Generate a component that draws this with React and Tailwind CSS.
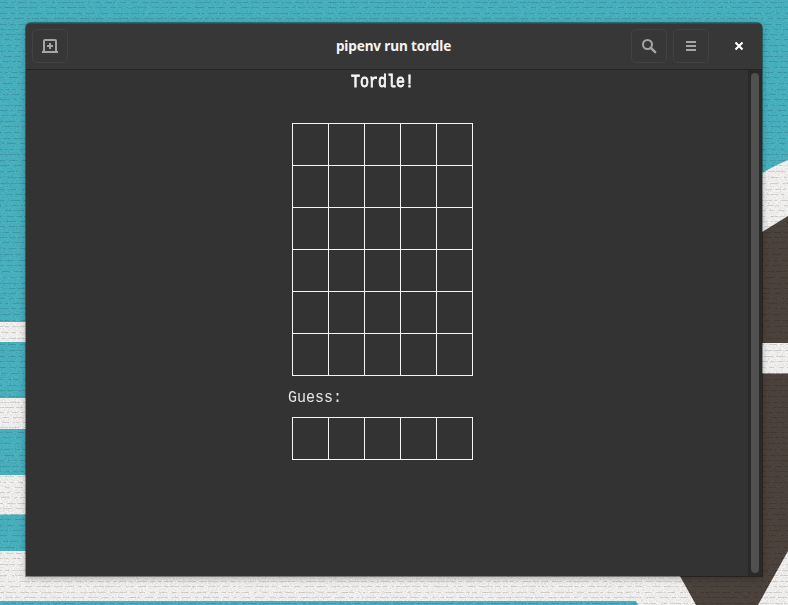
import React from "react";

// Deterministic generator, so that the weave looks the same on each load.
function makeWeave() {
  let seed = 17;
  const next = () => {
    seed = (seed * 16807) % 2147483647;
    return seed / 2147483647;
  };
  const out = [];
  for (let y = 2; y < 605; y += 5 + Math.floor(next() * 2)) {
    let x = -5;
    while (x < 788) {
      const len = 2 + Math.floor(next() * 9);
      out.push(`M${x} ${y}.5h${len}`);
      x += len + 1 + Math.floor(next() * 5);
    }
  }
  return out.join("");
}

const weave = makeWeave();

function Wallpaper() {
  return (
    <svg className="absolute inset-0" width="788" height="605" viewBox="0 0 788 605" aria-hidden="true">
      <defs>
        <filter id="grain" x="0" y="0" width="100%" height="100%">
          <feTurbulence type="fractalNoise" baseFrequency="0.6 0.8" numOctaves="2" seed="4" />
          <feColorMatrix values="0 0 0 0 0  0 0 0 0 0  0 0 0 0 0  0.7 0 0 0 -0.27" />
        </filter>
      </defs>
      <rect width="788" height="605" fill="#4ab4c2" />
      <g fill="#f5f4f3">
        <rect y="322" width="400" height="20" />
        <rect y="398" width="400" height="31" />
        <rect y="475" width="400" height="39.500" />
        <path d="M0 551H788V605H638L636 601H0Z" />
        <path d="M740 184 762 173Q776 165 788 160V605H740Z" />
      </g>
      <path d="M740 245 762 232 788 216V343H740ZM660 373.500H788V551L758 605H696L680 576 660 540Z" fill="#4e443e" />
      <path d={weave} stroke="#000" strokeOpacity="0.12" fill="none" />
      <rect width="788" height="605" filter="url(#grain)" opacity="0.35" />
    </svg>
  );
}

function HeaderButton({ label, children }) {
  return (
    <button
      aria-label={label}
      className="flex h-[34px] w-9 items-center justify-center rounded-[5px] border border-[#424242] text-[#a5a5a5]"
    >
      {children}
    </button>
  );
}

function TitleBar() {
  return (
    <header className="grid h-[47px] shrink-0 grid-cols-[1fr_auto_1fr] items-center border-t border-b border-t-[#454545] border-b-[#242424] bg-[#373737] pb-[2px]">
      <div className="pl-1.5">
        <HeaderButton label="New tab">
          <svg width="16" height="16" viewBox="0 0 16 16">
            <path d="M0 13H16V15H0ZM1 13V3Q1 1 3 1H13Q15 1 15 3V13H13V3H3V13Z" fill="currentColor" />
            <path d="M7 5H9V7H11V9H9V11H7V9H5V7H7Z" fill="currentColor" />
          </svg>
        </HeaderButton>
      </div>
      <h1 className="pr-px font-['Noto_Sans',sans-serif] text-[13.6px] leading-5 font-bold tracking-[-0.15px] text-[#f4f4f4]">
        pipenv run tordle
      </h1>
      <div className="flex items-center justify-end">
        <HeaderButton label="Search">
          <svg width="16" height="16" viewBox="0 0 16 16" fill="none" stroke="currentColor">
            <circle cx="6.500" cy="6.500" r="4.500" strokeWidth="2" />
            <path d="M9.800 9.800 14.200 14.200" strokeWidth="2.400" strokeLinecap="round" />
          </svg>
        </HeaderButton>
        <span className="w-1.5" />
        <HeaderButton label="Menu">
          <svg width="16" height="16" viewBox="0 0 16 16" fill="currentColor">
            <path d="M3 3H13V5H3ZM3 7H13V9H3ZM3 11H13V13H3Z" />
          </svg>
        </HeaderButton>
        <button aria-label="Close" className="mr-[15px] ml-[22px] flex size-4 items-center justify-center text-white">
          <svg width="16" height="16" viewBox="0 0 16 16" fill="none" stroke="currentColor">
            <path d="M4.500 4.500 11.500 11.500M11.500 4.500 4.500 11.500" strokeWidth="2.100" />
          </svg>
        </button>
      </div>
    </header>
  );
}

function Board({ rows }) {
  return (
    <div className="grid w-[181px] grid-cols-5 border-t border-l border-[#f6f6f6]">
      {Array.from({ length: rows * 5 }, (_, i) => (
        <div key={i} className="h-[42px] border-r border-b border-[#f6f6f6]" />
      ))}
    </div>
  );
}

export default function App() {
  return (
    <main className="relative h-[605px] w-[788px] overflow-hidden pt-[23px] pl-[26px]">
      <Wallpaper />
      <section className="relative flex h-[553px] w-[736px] flex-col overflow-hidden rounded-t-[5px] bg-[#333] shadow-[0_0_0_1px_rgba(0,0,0,0.35),0_2px_7px_rgba(0,0,0,0.3)]">
        <TitleBar />
        <div className="flex min-h-0 flex-1">
          <div className="flex w-[722px] flex-col font-['Liberation_Mono',monospace] text-[15px] leading-[21px] text-[#eee]">
            <h2 className="ml-[325px] h-[21px] origin-center scale-y-[1.2] pt-[1.5px] font-normal [-webkit-text-stroke:0.7px_#f6f6f6] text-[#f6f6f6]">
              Tordle!
            </h2>
            <div className="mt-8 ml-[266px]">
              <Board rows={6} />
            </div>
            <p className="mt-[10px] ml-[262px] h-[21px] origin-center scale-y-[1.16] pt-px text-[#e6e6e6]">Guess:</p>
            <div className="mt-[10px] ml-[266px]">
              <Board rows={1} />
            </div>
          </div>
          <div className="flex w-[14px] justify-center bg-[#292929] pt-[3px] pb-[3px]">
            <div className="w-2 rounded-full bg-[#505050]" />
          </div>
        </div>
      </section>
    </main>
  );
}
